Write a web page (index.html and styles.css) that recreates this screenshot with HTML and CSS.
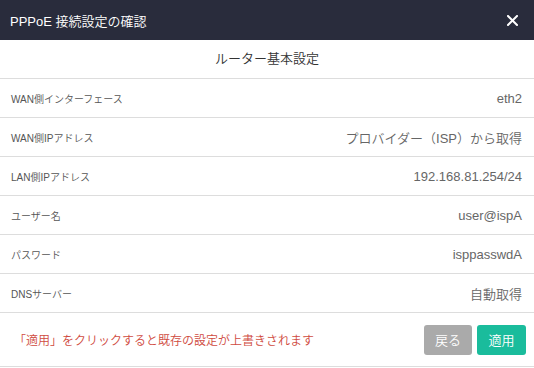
FILE: index.html
```html
<!DOCTYPE html>
<html lang="ja">
<head>
    <meta charset="UTF-8">
    <meta name="viewport" content="width=device-width, initial-scale=1.0">
    <title>PPPoE 接続設定の確認</title>
    <link rel="stylesheet" href="styles.css">
</head>
<body>
    <div class="dialog">
        <div class="dialog-header">
            <span class="dialog-title">PPPoE 接続設定の確認</span>
            <span class="close-btn">
                <svg width="11" height="11" viewBox="0 0 11 11">
                    <path d="M1 1L10 10M10 1L1 10" stroke="#fff" stroke-width="2" stroke-linecap="square"/>
                </svg>
            </span>
        </div>
        <div class="section-title">ルーター基本設定</div>
        <div class="row">
            <span class="label">WAN側インターフェース</span>
            <span class="value">eth2</span>
        </div>
        <div class="row">
            <span class="label">WAN側IPアドレス</span>
            <span class="value">プロバイダー（ISP）から取得</span>
        </div>
        <div class="row">
            <span class="label">LAN側IPアドレス</span>
            <span class="value">192.168.81.254/24</span>
        </div>
        <div class="row">
            <span class="label">ユーザー名</span>
            <span class="value">user@ispA</span>
        </div>
        <div class="row">
            <span class="label">パスワード</span>
            <span class="value">isppasswdA</span>
        </div>
        <div class="row">
            <span class="label">DNSサーバー</span>
            <span class="value">自動取得</span>
        </div>
        <div class="dialog-footer">
            <span class="warning">「適用」をクリックすると既存の設定が上書きされます</span>
            <div class="actions">
                <button class="btn btn-back">戻る</button>
                <button class="btn btn-apply">適用</button>
            </div>
        </div>
    </div>
</body>
</html>
```

FILE: styles.css
```css
body {
    margin: 0;
    font-family: "Liberation Sans", "Noto Sans CJK JP", sans-serif;
    background: #fff;
}
.dialog {
    width: 534px;
    height: 368px;
    background: #fff;
}
.dialog-header {
    height: 40px;
    background: #292c3c;
    color: #fff;
    display: flex;
    align-items: center;
    justify-content: space-between;
    padding: 0 16px 0 10px;
}
.dialog-title {
    font-size: 13px;
    font-weight: 350;
}
.close-btn {
    display: flex;
}
.section-title {
    height: 38px;
    line-height: 38px;
    text-align: center;
    font-size: 13px;
    font-weight: 350;
    color: #333;
    border-bottom: 1px solid #ddd;
}
.row {
    height: 38px;
    display: flex;
    align-items: center;
    justify-content: space-between;
    padding: 0 12px 0 11px;
    border-bottom: 1px solid #ddd;
}
.label {
    font-size: 10px;
    font-weight: 350;
    color: #555;
}
.value {
    font-size: 13px;
    font-weight: 350;
    color: #666;
}
.dialog-footer {
    height: 53px;
    display: flex;
    align-items: center;
    justify-content: space-between;
    padding: 0 8px 0 14px;
    border-bottom: 1px solid #ddd;
}
.warning {
    font-size: 12px;
    font-weight: 350;
    color: #cf4a40;
}
.actions {
    display: flex;
    gap: 5px;
}
.btn {
    height: 30px;
    border: none;
    border-radius: 3px;
    color: #fff;
    font-family: inherit;
    font-size: 13px;
    font-weight: 350;
    padding: 0;
}
.btn-back {
    width: 48px;
    background: #aaa;
}
.btn-apply {
    width: 49px;
    background: #1abc9c;
}
```
